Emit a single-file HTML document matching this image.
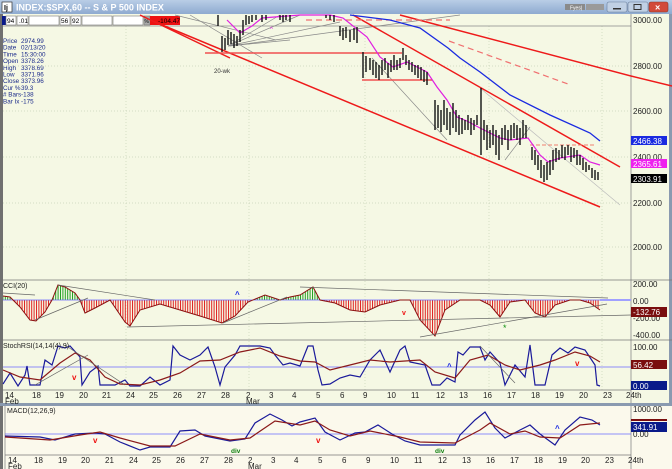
<!DOCTYPE html>
<html><head><meta charset="utf-8"><style>
body{margin:0;width:672px;height:469px;overflow:hidden;background:#f5f8e4;font-family:"Liberation Sans",sans-serif}
svg{display:block}
text{font-family:"Liberation Sans",sans-serif}
</style></head><body>
<svg width="672" height="469" viewBox="0 0 672 469" xmlns="http://www.w3.org/2000/svg">
<defs>
<linearGradient id="tb" x1="0" y1="0" x2="0" y2="1"><stop offset="0" stop-color="#b9cde6"/><stop offset="1" stop-color="#8eaad0"/></linearGradient>
<pattern id="rs" width="2.4" height="4" patternUnits="userSpaceOnUse"><rect width="1" height="4" fill="#e02020"/></pattern>
<pattern id="gs" width="2.4" height="4" patternUnits="userSpaceOnUse"><rect width="1" height="4" fill="#20a020"/></pattern>
<clipPath id="above"><rect x="0" y="270" width="631" height="30"/></clipPath>
<clipPath id="below"><rect x="0" y="300" width="631" height="40"/></clipPath>
<clipPath id="main"><rect x="3" y="14" width="628" height="266"/></clipPath>
</defs>
<!-- backgrounds -->
<rect width="672" height="469" fill="#f5f8e4"/>
<rect x="0" y="405" width="672" height="64" fill="#fbf9ec"/>
<rect x="0" y="0" width="3" height="469" fill="#707070"/>
<rect x="669" y="0" width="3" height="405" fill="#8a9ab0"/>
<rect x="0" y="403" width="672" height="3" fill="#8a9ab0"/>
<!-- title bar -->
<rect x="0" y="0" width="672" height="14" fill="url(#tb)"/>
<rect x="2" y="2" width="10" height="10" fill="#fff" stroke="#333" stroke-width="0.7"/>
<text x="4" y="10" font-size="7" fill="#000" font-weight="bold">Ij</text>
<text x="16" y="10.5" font-size="9" fill="#fff" font-weight="bold">INDEX:$SPX,60 -- S &amp; P 500 INDEX</text>
<rect x="565" y="4" width="20" height="6" fill="#8a8a8a"/><rect x="586" y="4" width="18" height="6" fill="#9a9a9a"/>
<text x="570" y="9.5" font-size="5" fill="#fff">Fyes|</text>
<rect x="607" y="2" width="20" height="10" rx="2" fill="#c0d0e4" stroke="#6a7e9a" stroke-width="0.6"/><rect x="613" y="8" width="8" height="1.5" fill="#333"/>
<rect x="628" y="2" width="20" height="10" rx="2" fill="#c0d0e4" stroke="#6a7e9a" stroke-width="0.6"/><rect x="634" y="4.5" width="7" height="5" fill="none" stroke="#333"/>
<rect x="649" y="2" width="19" height="10" rx="2" fill="#d24a3a" stroke="#8a3a2a" stroke-width="0.6"/><text x="655" y="10.5" font-size="9" fill="#fff" font-weight="bold">×</text>
<!-- toolbar -->
<g font-size="6.5" fill="#000" stroke-width="0.6">
<rect x="2" y="16" width="4" height="9" fill="#0a1a8a"/>
<rect x="6" y="16" width="10" height="9" fill="#fff" stroke="#777"/><text x="7" y="23">94</text>
<rect x="17" y="16" width="11" height="9" fill="#fff" stroke="#777"/><text x="19" y="23">.01</text>
<rect x="29" y="16" width="30" height="9" fill="#fff" stroke="#777"/>
<rect x="60" y="16" width="10" height="9" fill="#fff" stroke="#777"/><text x="61" y="23">56</text>
<rect x="71" y="16" width="10" height="9" fill="#fff" stroke="#777"/><text x="72" y="23">92</text>
<rect x="82" y="16" width="30" height="9" fill="#fff" stroke="#777"/>
<rect x="113" y="16" width="30" height="9" fill="#fff" stroke="#777"/>
<rect x="144" y="16" width="6" height="9" fill="#aaa" stroke="#777"/><text x="144.5" y="23" font-size="5">%</text>
<rect x="150" y="16" width="30" height="9" fill="#ee1111"/><text x="158" y="23">-104.47</text>
</g>
<!-- info -->
<g font-size="6.3" fill="#1a2a8a">
<text x="3" y="43">Price</text><text x="21" y="43">2974.99</text>
<text x="3" y="49.7">Date</text><text x="21" y="49.7">02/13/20</text>
<text x="3" y="56.4">Time</text><text x="21" y="56.4">15:30:00</text>
<text x="3" y="63.1">Open</text><text x="21" y="63.1">3378.26</text>
<text x="3" y="69.8">High</text><text x="21" y="69.8">3378.69</text>
<text x="3" y="76.5">Low</text><text x="21" y="76.5">3371.96</text>
<text x="3" y="83.2">Close</text><text x="21" y="83.2">3373.96</text>
<text x="3" y="89.9">Cur %</text><text x="21" y="89.9">39.3</text>
<text x="3" y="96.6"># Bars</text><text x="21" y="96.6">-138</text>
<text x="3" y="103.3">Bar Ix</text><text x="21" y="103.3">-175</text>
</g>
<!-- grid -->
<g stroke="#c8d4b8" stroke-width="0.7" stroke-dasharray="1,2">
<line x1="126" y1="26" x2="126" y2="390"/><line x1="249" y1="26" x2="249" y2="390"/><line x1="365" y1="26" x2="365" y2="390"/><line x1="489" y1="26" x2="489" y2="390"/><line x1="602" y1="26" x2="602" y2="390"/>
<line x1="3" y1="66" x2="631" y2="66"/><line x1="3" y1="111" x2="631" y2="111"/><line x1="3" y1="157" x2="631" y2="157"/><line x1="3" y1="203" x2="631" y2="203"/><line x1="3" y1="247" x2="631" y2="247"/>
</g>
<line x1="3" y1="26" x2="631" y2="26" stroke="#888" stroke-width="0.7"/>
<line x1="631" y1="14" x2="631" y2="403" stroke="#888" stroke-width="0.8"/>
<!-- main chart -->
<g clip-path="url(#main)" fill="none">
<g stroke="#888" stroke-width="0.7">
<line x1="228" y1="46" x2="300" y2="15"/><line x1="228" y1="46" x2="280" y2="15"/><line x1="228" y1="46" x2="340" y2="22"/><line x1="228" y1="46" x2="290" y2="40"/><line x1="230" y1="46" x2="460" y2="15"/><line x1="190" y1="15" x2="262" y2="58"/><line x1="175" y1="15" x2="276" y2="40"/>
<line x1="372" y1="58" x2="447" y2="140"/><line x1="480" y1="88" x2="620" y2="205" stroke="#bbb"/><line x1="505" y1="160" x2="530" y2="127"/>
</g>
<line x1="155" y1="22" x2="600" y2="207" stroke="#ee1a1a" stroke-width="1.5"/>
<line x1="140" y1="15" x2="230" y2="58" stroke="#ee1a1a" stroke-width="1.5"/>
<line x1="353" y1="15" x2="620" y2="167" stroke="#ee1a1a" stroke-width="1.5"/>
<line x1="400" y1="15" x2="631" y2="76" stroke="#ee1a1a" stroke-width="1.5"/>
<line x1="449" y1="41" x2="568" y2="84" stroke="#f07070" stroke-width="1.2" stroke-dasharray="6,4"/>
<line x1="306" y1="20" x2="450" y2="20" stroke="#f07070" stroke-width="1.2" stroke-dasharray="6,4"/>
<line x1="205" y1="53" x2="402" y2="53" stroke="#f05050" stroke-width="1.5"/>
<line x1="362" y1="80" x2="432" y2="80" stroke="#f05050" stroke-width="1.5"/>
<line x1="530" y1="145" x2="595" y2="145" stroke="#f08070" stroke-width="1" stroke-dasharray="4,2"/>
<polyline points="350,15 390,20 420,28 448,48 460,58 480,72 510,95 550,115 590,133 600,141" stroke="#1a2ae0" stroke-width="1.3"/>
<polyline points="227,20 240,33 252,26 262,18 300,15 330,15 343,18 367,37 380,57 393,67 407,62 427,72 437,87 447,100 457,117 467,121 480,128 500,138 510,140 528,138 540,155 548,162 560,158 580,155 590,162 600,165" stroke="#e020e0" stroke-width="1.2"/>
<path stroke="#111" stroke-width="1.4" d="M218 15V26M222 36V52M225 38V50M228 30V45M231 32V44M234 34V48M237 36V46M240 30V42M243 20V35M246 15V25M249 16V24M252 15V22M256 15V20M262 15V22M266 15V20M280 15V20M283 15V22M286 15V20M290 15V22M326 15V18M330 15V20M334 15V22M340 26V36M343 28V40M346 27V38M350 30V42M354 28V40M357 27V43M363 52V78M366 56V72M370 58V70M373 60V75M376 62V78M379 65V80M382 60V75M385 58V70M388 63V78M391 60V72M394 55V70M397 60V70M400 58V68M403 48V60M406 55V65M409 60V70M412 62V72M415 65V75M418 65V78M421 67V80M424 70V82M427 72V85M435 100V130M438 105V128M441 110V132M444 100V125M447 108V130M450 112V135M453 103V128M456 110V132M459 115V135M462 118V134M465 120V130M468 115V130M471 118V135M474 120V130M477 115V125M481 88V155M484 120V140M487 125V150M490 130V148M493 125V145M496 130V155M499 135V160M502 128V145M505 125V140M508 130V150M511 125V140M514 123V138M517 125V140M520 128V145M523 120V138M526 125V138M532 147V160M535 150V165M538 155V170M541 160V178M544 165V182M547 162V180M550 160V175M553 150V170M556 148V162M559 150V160M562 145V158M565 147V160M568 145V155M571 147V162M574 148V158M577 150V165M580 155V165M583 158V170M586 162V172M589 165V170M592 168V178M595 170V180M598 172V180"/>
<text x="214" y="73" font-size="6" fill="#333">20-wk</text>
<text x="270" y="31" font-size="6" fill="#e020e0">^</text>
</g>
<line x1="631" y1="76" x2="672" y2="86" stroke="#ee1a1a" stroke-width="1.5"/>
<!-- price axis labels -->
<g font-size="8" fill="#222">
<text x="633" y="23">3000.00</text><text x="633" y="69">2800.00</text><text x="633" y="114">2600.00</text><text x="633" y="160">2400.00</text><text x="633" y="206">2200.00</text><text x="633" y="250">2000.00</text>
</g>
<rect x="631" y="136" width="36" height="9" fill="#1a2ae0"/><text x="633" y="144" font-size="8" fill="#fff">2466.38</text>
<rect x="631" y="159" width="36" height="9" fill="#ee20ee"/><text x="633" y="167" font-size="8" fill="#fff">2365.61</text>
<rect x="631" y="174" width="36" height="9" fill="#000"/><text x="633" y="182" font-size="8" fill="#fff">2303.91</text>
<!-- CCI panel -->
<line x1="3" y1="280" x2="672" y2="280" stroke="#777" stroke-width="0.8"/>
<line x1="3" y1="340" x2="672" y2="340" stroke="#777" stroke-width="0.8"/>
<polygon clip-path="url(#below)" fill="url(#rs)" points="3,300 3,296 10,297 20,307 30,320 36,321 45,312 52,300 58,285 65,287 75,293 80,300 85,313 95,308 110,300 125,322 130,326 140,310 160,304 180,310 200,316 222,323 235,316 248,302 265,295 280,300 290,297 300,295 313,287 320,300 335,303 350,310 365,312 380,305 400,300 410,300 420,320 435,336 445,310 460,300 480,300 490,305 500,317 510,302 525,300 535,313 545,317 555,305 570,300 580,300 590,303 600,310 600,300"/>
<polygon clip-path="url(#above)" fill="url(#gs)" points="3,300 3,296 10,297 20,307 30,320 36,321 45,312 52,300 58,285 65,287 75,293 80,300 85,313 95,308 110,300 125,322 130,326 140,310 160,304 180,310 200,316 222,323 235,316 248,302 265,295 280,300 290,297 300,295 313,287 320,300 335,303 350,310 365,312 380,305 400,300 410,300 420,320 435,336 445,310 460,300 480,300 490,305 500,317 510,302 525,300 535,313 545,317 555,305 570,300 580,300 590,303 600,310 600,300"/>
<line x1="3" y1="300" x2="631" y2="300" stroke="#6a6aff" stroke-width="0.8"/>
<rect x="600" y="299" width="31" height="2" fill="#a0a0ff"/>
<polyline fill="none" stroke="#8b1010" stroke-width="1" points="3,296 10,297 20,307 30,320 36,321 45,312 52,300 58,285 65,287 75,293 80,300 85,313 95,308 110,300 125,322 130,326 140,310 160,304 180,310 200,316 222,323 235,316 248,302 265,295 280,300 290,297 300,295 313,287 320,300 335,303 350,310 365,312 380,305 400,300 410,300 420,320 435,336 445,310 460,300 480,300 490,305 500,317 510,302 525,300 535,313 545,317 555,305 570,300 580,300 590,303 600,310"/>
<g stroke="#666" stroke-width="0.7">
<line x1="3" y1="293" x2="35" y2="295"/><line x1="35" y1="320" x2="88" y2="298"/><line x1="58" y1="285" x2="155" y2="300"/><line x1="127" y1="327" x2="631" y2="315"/><line x1="300" y1="287" x2="608" y2="298"/><line x1="420" y1="337" x2="607" y2="304"/><line x1="223" y1="323" x2="287" y2="297"/>
</g>
<text x="3" y="288" font-size="7" fill="#222">CCI(20)</text>
<text x="235" y="297" font-size="8" fill="#1a2ae0" font-weight="bold">^</text>
<text x="402" y="315" font-size="7" fill="#ee1111" font-weight="bold">v</text>
<text x="503" y="331" font-size="9" fill="#109010">*</text>
<g font-size="8" fill="#222"><text x="633" y="287">200.00</text><text x="633" y="304">0.00</text><text x="633" y="321">-200.00</text><text x="633" y="338">-400.00</text></g>
<rect x="631" y="307" width="36" height="10" fill="#7a0e0e"/><text x="633" y="315" font-size="8" fill="#fff">-132.76</text>
<!-- Stoch panel -->
<line x1="3" y1="367" x2="631" y2="367" stroke="#6a6aff" stroke-width="0.8"/>
<polyline fill="none" stroke="#1a1a9a" stroke-width="1.2" points="3,384 10,373 18,386 25,375 27,366 30,385 40,385 45,360 52,365 58,346 65,348 70,346 80,357 82,385 90,372 98,366 100,385 115,385 125,380 130,386 140,386 150,377 160,385 170,380 173,346 180,355 190,360 200,355 208,347 215,367 220,385 225,367 235,355 240,346 260,346 270,348 275,355 283,365 290,363 300,366 308,346 313,346 318,370 322,385 330,384 340,378 350,375 360,377 370,360 380,350 390,372 400,350 405,346 410,362 425,365 432,385 440,385 447,378 455,382 458,352 463,355 470,347 480,347 485,360 490,352 500,363 505,385 515,365 525,377 530,345 535,385 545,385 552,355 560,348 568,353 575,347 585,350 595,365 597,385 600,386"/>
<polyline fill="none" stroke="#8b1a1a" stroke-width="1.2" points="3,370 20,377 40,380 60,363 75,353 90,360 105,377 120,384 140,385 160,380 180,373 200,361 220,360 240,352 260,348 280,356 300,361 315,362 330,370 350,365 370,360 390,362 420,360 435,372 455,378 470,360 488,355 505,365 520,370 540,365 555,360 575,352 590,356 600,362"/>
<g stroke="#666" stroke-width="0.7"><line x1="35" y1="385" x2="88" y2="355"/><line x1="65" y1="345" x2="125" y2="385"/><line x1="480" y1="346" x2="515" y2="383"/></g>
<text x="3" y="348" font-size="7" fill="#222">StochRSI(14,14(4),9)</text>
<text x="72" y="380" font-size="8" fill="#ee1111" font-weight="bold">v</text>
<text x="447" y="369" font-size="8" fill="#1a2ae0" font-weight="bold">^</text>
<text x="575" y="366" font-size="8" fill="#ee1111" font-weight="bold">v</text>
<text x="633" y="350" font-size="8" fill="#222">100.00</text>
<rect x="631" y="360" width="36" height="9" fill="#7a0e0e"/><text x="633" y="368" font-size="8" fill="#fff">56.42</text>
<rect x="631" y="381" width="36" height="9" fill="#0a1a8a"/><text x="633" y="389" font-size="8" fill="#fff">0.00</text>
<line x1="3" y1="390" x2="631" y2="390" stroke="#777" stroke-width="0.8"/>
<!-- date axis 1 -->
<g font-size="8" fill="#222">
<text x="5" y="398">14</text><text x="5" y="404">Feb</text><text x="32" y="398">18</text><text x="55" y="398">19</text><text x="79" y="398">20</text><text x="102" y="398">21</text><text x="126" y="398">24</text><text x="149" y="398">25</text><text x="173" y="398">26</text><text x="197" y="398">27</text><text x="221" y="398">28</text><text x="246" y="398">2</text><text x="246" y="404">Mar</text><text x="269" y="398">3</text><text x="292" y="398">4</text><text x="316" y="398">5</text><text x="340" y="398">6</text><text x="363" y="398">9</text><text x="387" y="398">10</text><text x="411" y="398">11</text><text x="436" y="398">12</text><text x="459" y="398">13</text><text x="483" y="398">16</text><text x="507" y="398">17</text><text x="531" y="398">18</text><text x="555" y="398">19</text><text x="579" y="398">20</text><text x="603" y="398">23</text><text x="626" y="398">24th</text>
</g>
<!-- MACD -->
<line x1="5" y1="406" x2="5" y2="469" stroke="#888" stroke-width="0.8"/>
<line x1="631" y1="406" x2="631" y2="469" stroke="#888" stroke-width="0.8"/>
<line x1="5" y1="434" x2="631" y2="434" stroke="#6a6aff" stroke-width="0.8"/>
<polyline fill="none" stroke="#1a1a9a" stroke-width="1.2" points="5,436 40,437 55,440 75,434 95,433 105,434 120,442 140,450 150,447 170,447 180,431 195,430 205,436 230,441 245,439 255,423 270,414 282,420 292,426 300,422 315,418 325,432 340,440 355,433 365,432 378,425 392,434 405,441 420,445 455,445 460,435 475,420 485,412 495,428 505,438 520,430 530,425 540,434 555,445 565,430 580,417 592,420 600,425"/>
<polyline fill="none" stroke="#8b1a1a" stroke-width="1.2" points="5,437 50,440 80,435 100,432 120,438 150,446 175,446 200,434 230,440 250,438 275,421 300,425 315,421 330,430 350,436 370,431 400,437 420,442 455,443 480,430 490,423 510,434 525,431 540,437 560,438 580,425 600,423"/>
<text x="7" y="413" font-size="7" fill="#222">MACD(12,26,9)</text>
<text x="93" y="443" font-size="8" fill="#ee1111" font-weight="bold">v</text>
<text x="316" y="443" font-size="8" fill="#ee1111" font-weight="bold">v</text>
<text x="231" y="453" font-size="6.5" fill="#108010" font-weight="bold">div</text>
<text x="435" y="453" font-size="6.5" fill="#108010" font-weight="bold">div</text>
<text x="555" y="431" font-size="8" fill="#1a2ae0" font-weight="bold">^</text>
<text x="633" y="412" font-size="8" fill="#222">1000.00</text>
<rect x="631" y="419" width="36" height="2" fill="#7a0e0e"/>
<rect x="631" y="422" width="36" height="10" fill="#0a1a8a"/><text x="633" y="430" font-size="8" fill="#fff">341.91</text>
<text x="633" y="437" font-size="8" fill="#222">0.00</text>
<line x1="5" y1="455" x2="631" y2="455" stroke="#777" stroke-width="0.8"/>
<g font-size="8" fill="#222">
<text x="8" y="463">14</text><text x="8" y="469">Feb</text><text x="34" y="463">18</text><text x="58" y="463">19</text><text x="81" y="463">20</text><text x="105" y="463">21</text><text x="129" y="463">24</text><text x="152" y="463">25</text><text x="176" y="463">26</text><text x="200" y="463">27</text><text x="224" y="463">28</text><text x="248" y="463">2</text><text x="248" y="469">Mar</text><text x="271" y="463">3</text><text x="294" y="463">4</text><text x="318" y="463">5</text><text x="342" y="463">6</text><text x="366" y="463">9</text><text x="390" y="463">10</text><text x="414" y="463">11</text><text x="438" y="463">12</text><text x="462" y="463">13</text><text x="486" y="463">16</text><text x="510" y="463">17</text><text x="534" y="463">18</text><text x="558" y="463">19</text><text x="581" y="463">20</text><text x="605" y="463">23</text><text x="628" y="463">24th</text>
</g>
</svg>
</body></html>
